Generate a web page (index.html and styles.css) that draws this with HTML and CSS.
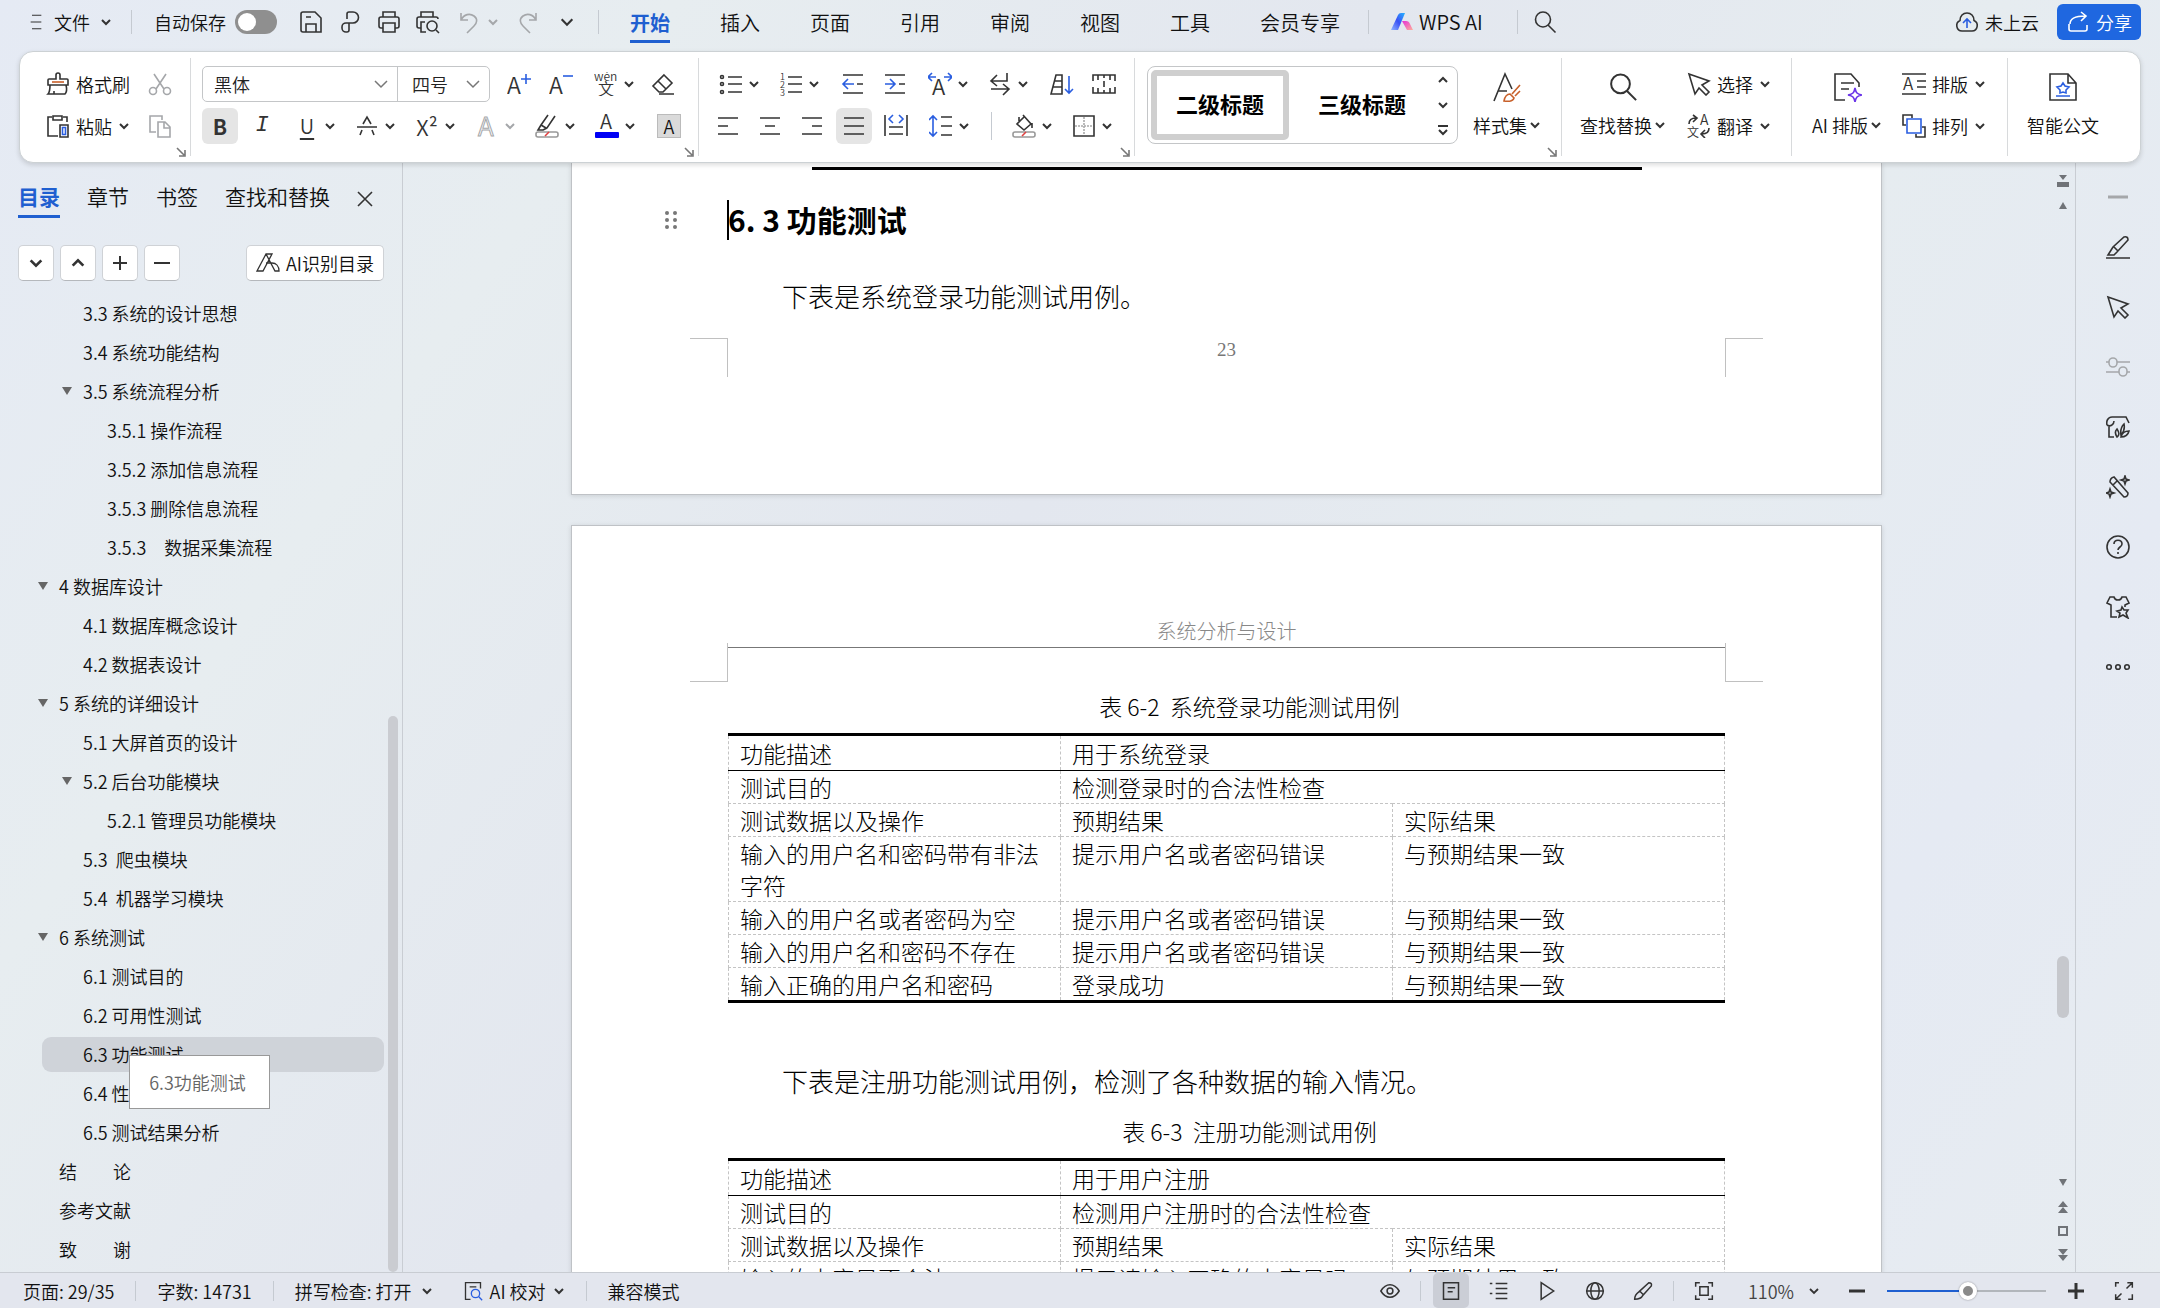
FILE: index.html
```html
<!DOCTYPE html>
<html lang="zh-CN">
<head>
  <meta charset="UTF-8">
  <meta name="viewport" content="width=device-width, initial-scale=1.0">
  <title>WPS 文字</title>
  <link rel="stylesheet" href="styles.css">
</head>
<body>

  <svg class="sprite" aria-hidden="true">
    <symbol id="chev" viewBox="0 0 12 12"><path d="M2 4l4 4 4-4"/></symbol>
    <symbol id="launch" viewBox="0 0 10 10"><path d="M1 1l7 7M9 3v6H3"/></symbol>
    <symbol id="search" viewBox="0 0 24 24"><circle cx="10" cy="9.500" r="7.500"/><path d="M15 15l7.500 7.500"/></symbol>
    <symbol id="save" viewBox="0 0 24 24"><path d="M2 4a2 2 0 0 1 2-2h12l6 6v14H4a2 2 0 0 1-2-2zM7 22v-8h10v8M7 7h5"/></symbol>
    <symbol id="pdf" viewBox="0 0 24 24"><path d="M9 9V4a2 2 0 0 1 2-2h4a5 5 0 0 1 0 11H8a4 4 0 0 0-4 4v1a4 4 0 0 0 4 4h1a2 2 0 0 0 2-2v-7"/></symbol>
    <symbol id="print" viewBox="0 0 24 24"><path d="M6 7V2h12v5M6 18H4a2 2 0 0 1-2-2V9a2 2 0 0 1 2-2h16a2 2 0 0 1 2 2v7a2 2 0 0 1-2 2h-2M6 13h12v9H6z"/></symbol>
    <symbol id="preview" viewBox="0 0 24 24"><path d="M5 7V2h12v5M5 18H3a2 2 0 0 1-2-2V9a2 2 0 0 1 2-2h17a2 2 0 0 1 2 2M9 12H5v10h5M20 20l3 3"/><circle cx="16" cy="16" r="5"/></symbol>
    <symbol id="undo" viewBox="0 0 24 24"><path d="M4 3v7h7M4 10c3-6 9-7 13-4s3 7 0 10l-7 7"/></symbol>
    <symbol id="redo" viewBox="0 0 24 24"><path d="M20 3v7h-7M20 10c-3-6-9-7-13-4s-3 7 0 10l7 7"/></symbol>
    <symbol id="cloud" viewBox="0 0 24 24"><path d="M7 21a5.500 5.500 0 0 1-2-10.500C5 6 8 3 12 3s7 3 7 7.500A5.500 5.500 0 0 1 17 21z"/><path class="blue" d="M12 18V9M8 13l4-4 4 4"/></symbol>
    <symbol id="share" viewBox="0 0 24 24"><path d="M3 14v5a2 2 0 0 0 2 2h14a2 2 0 0 0 2-2v-4M4 14c0-6 5-8 15-8M15 2l5 4-5 5"/></symbol>
    <symbol id="brush" viewBox="0 0 24 24"><path d="M10 7V3a2 2 0 0 1 4 0v4h7a1 1 0 0 1 1 1v5H2V8a1 1 0 0 1 1-1zM4 13c0 4 0 7-2 9h17c2-2 2-5 1-9M8 22v-3"/><path class="orange" d="M6 10h12"/></symbol>
    <symbol id="cut" viewBox="0 0 24 24"><path d="M6 2l10 15M18 2L8 17"/><circle cx="5" cy="19" r="3.500"/><circle cx="19" cy="19" r="3.500"/></symbol>
    <symbol id="paste" viewBox="0 0 24 24"><path d="M6 3H2v19h10M17 3h4v5M7 2h9v4H7z"/><path d="M14 11h8v12h-8z"/><path class="blue" d="M16.500 13.500h3v7h-3z"/></symbol>
    <symbol id="copy" viewBox="0 0 24 24"><path d="M8 18H2V2h12v4M10 8h7l5 5v10H10zM16 8v6h6"/></symbol>
    <symbol id="aplus" viewBox="0 0 24 24"><text x="0" y="22" font-size="23">A</text><path class="blue" d="M19 2v10M14 7h10"/></symbol>
    <symbol id="aminus" viewBox="0 0 24 24"><text x="0" y="22" font-size="23">A</text><path class="blue" d="M14 4h10"/></symbol>
    <symbol id="wen" viewBox="0 0 24 24"><text x="0" y="9" font-size="12">wén</text><text x="4" y="23" font-size="16">文</text></symbol>
    <symbol id="eraser" viewBox="0 0 24 24"><path d="M13 3l8 8-9 9H8l-6-6zM7 9l8 8M8 22h15"/></symbol>
    <symbol id="strike" viewBox="0 0 24 24"><path d="M2 13h20M8 10l4-7 4 7M7 16l-2 5M17 16l2 5"/></symbol>
    <symbol id="aoutline" viewBox="0 0 24 24"><text class="outline" x="3" y="22" font-size="26">A</text></symbol>
    <symbol id="marker" viewBox="0 0 24 24"><path d="M13 1L6 11l-3 5h5l4-2 8-12M6 11l5 3M8 16l4-2"/><rect class="grey" x="1" y="18" width="22" height="5" rx="2"/><path class="red" d="M10 22l4-4"/></symbol>
    <symbol id="acolor" viewBox="0 0 24 24"><text x="5" y="15" font-size="20">A</text><rect class="pureblue" x="0" y="18" width="24" height="6" rx="1"/></symbol>
    <symbol id="bullets" viewBox="0 0 24 24"><path d="M9 5h14M9 12h14M9 20h14"/><circle cx="3" cy="5" r="1.500"/><circle cx="3" cy="12" r="1.500"/><circle cx="3" cy="20" r="1.500"/></symbol>
    <symbol id="numbers" viewBox="0 0 24 24"><path d="M9 5h14M9 12h14M9 20h14"/><text x="1" y="8" font-size="9">1</text><text x="1" y="16" font-size="9">2</text><text x="1" y="24" font-size="9">3</text></symbol>
    <symbol id="outdent" viewBox="0 0 24 24"><path d="M2 3h20M16 12h6M2 21h20"/><path class="blue" d="M13 12H2M7 7l-5 5 5 5"/></symbol>
    <symbol id="indent" viewBox="0 0 24 24"><path d="M2 3h20M16 12h6M2 21h20"/><path class="blue" d="M2 12h10M7 7l5 5-5 5"/></symbol>
    <symbol id="aspace" viewBox="0 0 24 24"><text x="4" y="23" font-size="22">A</text><path class="blue" d="M8 5H0M4 1L0 5l4 4M16 5h8M20 1l4 4-4 4"/></symbol>
    <symbol id="wrap" viewBox="0 0 24 24"><path d="M19 1v8H4M9 3L3 9l6 5M3 17h18M15 12l6 5-6 6"/></symbol>
    <symbol id="sort" viewBox="0 0 24 24"><path d="M6 3h6v19H1zM5 9h7M3 15h9"/><path class="blue" d="M19 4v17M15 17l4 4 4-4"/></symbol>
    <symbol id="tabs" viewBox="0 0 24 24"><path d="M1 9V3h22v6M1 15v6h22v-6M6 3v5M12 3v3M18 3v5M6 21v-5M12 21v-3M18 21v-5M12 9v6"/></symbol>
    <symbol id="left" viewBox="0 0 24 24"><path d="M2 4h20M2 12h10M2 20h20"/></symbol>
    <symbol id="center" viewBox="0 0 24 24"><path d="M2 4h20M7 12h10M2 20h20"/></symbol>
    <symbol id="right" viewBox="0 0 24 24"><path d="M2 4h20M12 12h10M2 20h20"/></symbol>
    <symbol id="justify" viewBox="0 0 24 24"><path d="M2 4h20M2 12h20M2 20h20"/></symbol>
    <symbol id="distribute" viewBox="0 0 24 24"><path d="M1 1v21M23 1v21M5 13h14M5 20h14"/><path class="blue" d="M9 1L5 5l4 4M15 1l4 4-4 4"/></symbol>
    <symbol id="spacing" viewBox="0 0 24 24"><path d="M12 3h11M12 12h11M12 21h11"/><path class="blue" d="M4 2v20M0 6l4-4 4 4M0 18l4 4 4-4"/></symbol>
    <symbol id="fill" viewBox="0 0 24 24"><path d="M11 1l8 9-7 6-7-6 7-7M20 9v5M7 3v4"/><rect class="grey" x="1" y="18" width="22" height="5" rx="2"/><path class="red" d="M10 22l4-4"/></symbol>
    <symbol id="border" viewBox="0 0 24 24"><path d="M2 2h20v20H2z"/><path class="dots" d="M12 3v18M3 12h18"/></symbol>
    <symbol id="styles" viewBox="0 0 30 30"><path d="M2 29L13 2l7 15M6 19h9"/><path class="orange" d="M28 13l-8 9M28 19l-5 5M12 29c1-5 3-7 6-7l4 4c-1 3-4 4-10 3z"/></symbol>
    <symbol id="pointer" viewBox="0 0 24 24"><path d="M2 2l20 7-7 4 7 7-3 3-7-7-4 6z"/></symbol>
    <symbol id="translate" viewBox="0 0 24 24"><text x="13" y="11" font-size="14">A</text><text x="0" y="23" font-size="12">文</text><path d="M2 10c0-4 2-6 7-6M6 1l4 3-4 4M22 14c0 4-2 6-7 6M18 16l-4 4 4 4"/></symbol>
    <symbol id="aidoc" viewBox="0 0 30 30"><path d="M13 28H3V2h16l8 9v4M9 11h13M9 17h8"/><path class="purple" d="M23 16c1 5 2 6 7 7-5 1-6 2-7 7-1-5-2-6-7-7 5-1 6-2 7-7z"/></symbol>
    <symbol id="typeset" viewBox="0 0 24 24"><text x="1" y="18" font-size="17">A</text><path d="M0 2h24M15 9h9M15 15h9M0 22h24"/></symbol>
    <symbol id="arrange" viewBox="0 0 24 24"><path d="M4 11H1V1h9v3M20 13h3v10h-9v-3"/><path class="blue" d="M5 5h14v14H5z"/></symbol>
    <symbol id="smartdoc" viewBox="0 0 30 30"><path d="M2 2h18l8 9v17H2zM20 2v9h8"/><path class="blue" d="M15 11l2 3 4 1-3 3v3l-3-1-3 1v-3l-3-3 4-1zM8 24h14"/></symbol>
    <symbol id="ai" viewBox="0 0 24 24"><path d="M1 20L10 3h6L7 20zM10 3l9 17h4c0-5-3-8-7-8h-6"/></symbol>
    <symbol id="pen" viewBox="0 0 24 24"><path d="M2 20l5-8L18 2q4-1 4 3L11 17l-3 3zM8 12l4 4M0 23h24"/></symbol>
    <symbol id="sliders" viewBox="0 0 24 24"><path d="M0 7h3M11 7h13M0 17h13M21 17h3"/><rect x="3" y="3" width="8" height="9" rx="4"/><rect x="13" y="12" width="8" height="9" rx="4"/></symbol>
    <symbol id="plant" viewBox="0 0 24 24"><path d="M3 11v11h5M1 10c-1-4 1-8 5-8h14l3 6M1 10c3 2 7 0 7-4M11 22c-2-3-2-6 0-8 2 3 3 6 0 8zM15 20c-1-6 1-9 3-11 1 5 0 8-3 11zM15 22c1-4 4-6 8-6-1 4-4 6-8 6z"/></symbol>
    <symbol id="wand" viewBox="0 0 24 24"><path d="M4 7q0-4 4-5l14 16q0 4-4 4zM7 10l4-4M19 1l1 3 3 1-3 1-1 3-1-3-3-1 3-1zM4 14l1 3 3 1-3 1-1 3-1-3-3-1 3-1z"/></symbol>
    <symbol id="help" viewBox="0 0 24 24"><circle cx="12" cy="12" r="11"/><path d="M8 9c0-5 8-5 8 0 0 3-4 3-4 6M12 17v2"/></symbol>
    <symbol id="shirt" viewBox="0 0 24 24"><path d="M11 22H5V10l-4-2 3-6h4c1 4 7 4 8 0h4l3 6-4 2v2M16 12l2 3h4l-2 3 2 5-5-3-4 2 1-4-3-2 4-1z"/></symbol>
    <symbol id="more" viewBox="0 0 24 24"><circle cx="3" cy="12" r="2.300"/><circle cx="12" cy="12" r="2.300"/><circle cx="21" cy="12" r="2.300"/></symbol>
    <symbol id="eye" viewBox="0 0 24 24"><path d="M1 12c6-10 16-10 22 0-6 10-16 10-22 0z"/><circle cx="12" cy="12" r="3.500"/></symbol>
    <symbol id="pageview" viewBox="0 0 24 24"><path d="M3 2h18v20H3zM8 8h9M8 13h6"/></symbol>
    <symbol id="outline" viewBox="0 0 24 24"><path d="M1 3h3M8 3h14M8 9h14M1 15h3M8 15h14M8 21h14"/></symbol>
    <symbol id="play" viewBox="0 0 24 24"><path d="M5 2l15 10L5 22z"/></symbol>
    <symbol id="globe" viewBox="0 0 24 24"><circle cx="12" cy="12" r="10"/><ellipse cx="12" cy="12" rx="5" ry="10"/><path d="M2 12h20"/></symbol>
    <symbol id="feather" viewBox="0 0 24 24"><path d="M2 22c0-5 2-7 5-9L19 2q4 0 3 4L12 17c-2 4-5 5-10 5zM8 12l5 5"/></symbol>
    <symbol id="fit" viewBox="0 0 24 24"><path d="M2 7V2h5M17 2h5v5M2 17v5h5M17 22h5v-5M7 7h10v10H7z"/></symbol>
    <symbol id="full" viewBox="0 0 24 24"><path d="M2 7V2h4M16 2h6v6M22 16v6h-5M8 22H2v-6M22 2l-7 7M2 22l7-7"/></symbol>
    <symbol id="proof" viewBox="0 0 24 24"><path d="M9 22H3V2h18v7M8 7h8"/><circle class="blue" cx="15" cy="15" r="5"/><path class="blue" d="M19 19l4 4"/></symbol>
  </svg>

  <header class="topbar">
    <button class="menu-btn"><svg class="i-16" viewBox="0 0 16 24"><path d="M2 2h14M0 12h16M2 22h14"/></svg>文件<svg class="i-12"><use href="#chev"/></svg></button>
    <span class="sep"></span>
    <label class="autosave">自动保存<input type="checkbox" class="switch"></label>
    <div class="quick">
      <button title="保存"><svg><use href="#save"/></svg></button>
      <button title="输出为PDF"><svg><use href="#pdf"/></svg></button>
      <button title="打印"><svg><use href="#print"/></svg></button>
      <button title="打印预览"><svg><use href="#preview"/></svg></button>
      <button class="off drop-sm" title="撤销"><svg><use href="#undo"/></svg><svg class="i-12"><use href="#chev"/></svg></button>
      <button class="off" title="恢复"><svg><use href="#redo"/></svg></button>
      <button title="更多"><svg class="i-16"><use href="#chev"/></svg></button>
    </div>
    <span class="sep"></span>
    <nav class="tabs">
      <a href="#" class="active">开始</a>
      <a href="#">插入</a>
      <a href="#">页面</a>
      <a href="#">引用</a>
      <a href="#">审阅</a>
      <a href="#">视图</a>
      <a href="#">工具</a>
      <a href="#">会员专享</a>
    </nav>
    <span class="sep"></span>
    <a href="#" class="wps-ai">
      <svg viewBox="0 0 24 24">
        <defs>
          <linearGradient id="g1" x1="0" y1="1" x2="1" y2="0"><stop offset="0" stop-color="#8fb4ff"/><stop offset=".5" stop-color="#3a50f5"/><stop offset="1" stop-color="#25b4ff"/></linearGradient>
          <linearGradient id="g2" x1="0" y1="0" x2="1" y2="1"><stop offset="0" stop-color="#e52fd8"/><stop offset="1" stop-color="#ffb09a"/></linearGradient>
        </defs>
        <path d="M1 20L8 5q1-2 3-2h4L8 20z" fill="url(#g1)" stroke="none"/>
        <path d="M12 11h4q3 0 4 3l3 6h-6z" fill="url(#g2)" stroke="none"/>
      </svg>WPS AI</a>
    <span class="sep"></span>
    <button title="搜索"><svg><use href="#search"/></svg></button>
    <div class="account">
      <button class="cloud-btn"><svg><use href="#cloud"/></svg>未上云</button>
      <button class="share-btn"><svg><use href="#share"/></svg>分享</button>
    </div>
  </header>

  <section class="ribbon">
    <div class="group clip">
      <div class="row">
        <button class="text-btn"><svg><use href="#brush"/></svg>格式刷</button>
        <button class="off" title="剪切"><svg><use href="#cut"/></svg></button>
      </div>
      <div class="row">
        <button class="text-btn"><svg><use href="#paste"/></svg>粘贴<svg class="i-12"><use href="#chev"/></svg></button>
        <button class="off" title="复制"><svg><use href="#copy"/></svg></button>
      </div>
      <svg class="launcher"><use href="#launch"/></svg>
    </div>

    <div class="group font">
      <div class="row">
        <div class="font-box">
          <select class="font-name" aria-label="字体"><option>黑体</option></select>
          <select class="font-size" aria-label="字号"><option>四号</option></select>
        </div>
        <button class="tool" title="增大字号"><svg><use href="#aplus"/></svg></button>
        <button class="tool" title="减小字号"><svg><use href="#aminus"/></svg></button>
        <button class="drop" title="拼音指南"><svg><use href="#wen"/></svg><svg class="i-12"><use href="#chev"/></svg></button>
        <button class="tool" title="清除格式"><svg><use href="#eraser"/></svg></button>
      </div>
      <div class="row">
        <button class="tool on" title="加粗"><b>B</b></button>
        <button class="tool" title="倾斜"><i>I</i></button>
        <button class="drop" title="下划线"><u>U</u><svg class="i-12"><use href="#chev"/></svg></button>
        <button class="drop" title="删除线"><svg><use href="#strike"/></svg><svg class="i-12"><use href="#chev"/></svg></button>
        <button class="drop" title="上标"><span class="glyph">X²</span><svg class="i-12"><use href="#chev"/></svg></button>
        <button class="drop off" title="文字效果"><svg><use href="#aoutline"/></svg><svg class="i-12"><use href="#chev"/></svg></button>
        <button class="drop" title="突出显示"><svg><use href="#marker"/></svg><svg class="i-12"><use href="#chev"/></svg></button>
        <button class="drop" title="字体颜色"><svg><use href="#acolor"/></svg><svg class="i-12"><use href="#chev"/></svg></button>
        <button class="tool space" title="字符底纹"><span class="shade">A</span></button>
      </div>
      <svg class="launcher"><use href="#launch"/></svg>
    </div>

    <div class="group para">
      <div class="row">
        <button class="drop" title="项目符号"><svg><use href="#bullets"/></svg><svg class="i-12"><use href="#chev"/></svg></button>
        <button class="drop" title="编号"><svg><use href="#numbers"/></svg><svg class="i-12"><use href="#chev"/></svg></button>
        <button class="tool space" title="减少缩进"><svg><use href="#outdent"/></svg></button>
        <button class="tool" title="增加缩进"><svg><use href="#indent"/></svg></button>
        <button class="drop" title="中文版式"><svg><use href="#aspace"/></svg><svg class="i-12"><use href="#chev"/></svg></button>
        <button class="drop" title="换行"><svg><use href="#wrap"/></svg><svg class="i-12"><use href="#chev"/></svg></button>
        <button class="tool space" title="排序"><svg><use href="#sort"/></svg></button>
        <button class="tool" title="制表位"><svg><use href="#tabs"/></svg></button>
      </div>
      <div class="row">
        <button class="tool" title="左对齐"><svg><use href="#left"/></svg></button>
        <button class="tool" title="居中"><svg><use href="#center"/></svg></button>
        <button class="tool" title="右对齐"><svg><use href="#right"/></svg></button>
        <button class="tool on" title="两端对齐"><svg><use href="#justify"/></svg></button>
        <button class="tool" title="分散对齐"><svg><use href="#distribute"/></svg></button>
        <button class="drop" title="行距"><svg><use href="#spacing"/></svg><svg class="i-12"><use href="#chev"/></svg></button>
        <span class="sep sep-row"></span>
        <button class="drop" title="底纹颜色"><svg><use href="#fill"/></svg><svg class="i-12"><use href="#chev"/></svg></button>
        <button class="drop" title="边框"><svg><use href="#border"/></svg><svg class="i-12"><use href="#chev"/></svg></button>
      </div>
      <svg class="launcher"><use href="#launch"/></svg>
    </div>

    <div class="group wide styles-group">
      <div class="gallery">
        <button class="style-item chosen">二级标题</button>
        <button class="style-item">三级标题</button>
        <div class="gallery-nav">
          <svg class="i-12 up"><use href="#chev"/></svg>
          <svg class="i-12"><use href="#chev"/></svg>
          <svg class="i-12" viewBox="0 0 12 12"><path d="M1 2h10M2 6l4 4 4-4"/></svg>
        </div>
      </div>
      <button class="big"><svg class="i-30"><use href="#styles"/></svg><span>样式集<svg class="i-12"><use href="#chev"/></svg></span></button>
      <svg class="launcher"><use href="#launch"/></svg>
    </div>

    <div class="group wide find">
      <button class="big"><svg class="i-30"><use href="#search"/></svg><span>查找替换<svg class="i-12"><use href="#chev"/></svg></span></button>
      <div class="stack">
        <button class="text-btn"><svg><use href="#pointer"/></svg>选择<svg class="i-12"><use href="#chev"/></svg></button>
        <button class="text-btn"><svg><use href="#translate"/></svg>翻译<svg class="i-12"><use href="#chev"/></svg></button>
      </div>
    </div>

    <div class="group wide layout">
      <button class="big"><svg class="i-30"><use href="#aidoc"/></svg><span>AI 排版<svg class="i-12"><use href="#chev"/></svg></span></button>
      <div class="stack">
        <button class="text-btn"><svg><use href="#typeset"/></svg>排版<svg class="i-12"><use href="#chev"/></svg></button>
        <button class="text-btn"><svg><use href="#arrange"/></svg>排列<svg class="i-12"><use href="#chev"/></svg></button>
      </div>
    </div>

    <div class="group wide smart">
      <button class="big"><svg class="i-30"><use href="#smartdoc"/></svg><span>智能公文</span></button>
    </div>
  </section>

  <main class="workspace">
    <aside class="sidebar">
      <div class="side-tabs">
        <a href="#" class="active">目录</a>
        <a href="#">章节</a>
        <a href="#">书签</a>
        <a href="#">查找和替换</a>
        <button title="关闭"><svg class="i-16" viewBox="0 0 16 16"><path d="M1 1l14 14M15 1L1 15"/></svg></button>
      </div>
      <div class="side-tools">
        <button title="展开"><svg class="i-16"><use href="#chev"/></svg></button>
        <button title="收起"><svg class="i-16 up"><use href="#chev"/></svg></button>
        <button title="增加"><svg class="i-16" viewBox="0 0 16 16"><path d="M8 1v14M1 8h14"/></svg></button>
        <button title="减少"><svg class="i-16" viewBox="0 0 16 16"><path d="M0 8h16"/></svg></button>
        <button class="ai-toc"><svg><use href="#ai"/></svg>AI识别目录</button>
      </div>
      <div class="toc-wrap">
        <ul class="toc">
          <li class="l2">3.3 系统的设计思想</li>
          <li class="l2">3.4 系统功能结构</li>
          <li class="l2 open">3.5 系统流程分析</li>
          <li class="l3">3.5.1 操作流程</li>
          <li class="l3">3.5.2 添加信息流程</li>
          <li class="l3">3.5.3 删除信息流程</li>
          <li class="l3">3.5.3　数据采集流程</li>
          <li class="l1 open">4 数据库设计</li>
          <li class="l2">4.1 数据库概念设计</li>
          <li class="l2">4.2 数据表设计</li>
          <li class="l1 open">5 系统的详细设计</li>
          <li class="l2">5.1 大屏首页的设计</li>
          <li class="l2 open">5.2 后台功能模块</li>
          <li class="l3">5.2.1 管理员功能模块</li>
          <li class="l2">5.3&nbsp; 爬虫模块</li>
          <li class="l2">5.4&nbsp; 机器学习模块</li>
          <li class="l1 open">6 系统测试</li>
          <li class="l2">6.1 测试目的</li>
          <li class="l2">6.2 可用性测试</li>
          <li class="l2 current">6.3 功能测试<span class="tooltip">6.3功能测试</span></li>
          <li class="l2">6.4 性能测试</li>
          <li class="l2">6.5 测试结果分析</li>
          <li class="l1">结　　论</li>
          <li class="l1">参考文献</li>
          <li class="l1">致　　谢</li>
        </ul>
        <div class="side-scroll"></div>
      </div>
    </aside>

    <div class="canvas">
      <article class="page first">
        <div class="table-end"></div>
        <h2><svg class="grip" viewBox="0 0 12 18"><circle cx="2" cy="2" r="2"/><circle cx="10" cy="2" r="2"/><circle cx="2" cy="9" r="2"/><circle cx="10" cy="9" r="2"/><circle cx="2" cy="16" r="2"/><circle cx="10" cy="16" r="2"/></svg><span class="caret"></span>6. 3 功能测试</h2>
        <p>下表是系统登录功能测试用例。</p>
        <div class="crop bottom"><i></i><span class="page-no">23</span><i></i></div>
      </article>

      <article class="page second">
        <div class="page-header">系统分析与设计</div>
        <div class="crop top"><i></i><span class="rule"></span><i></i></div>
        <table>
          <caption>表 6-2&nbsp; 系统登录功能测试用例</caption>
          <colgroup><col><col><col></colgroup>
          <tr class="head"><td>功能描述</td><td colspan="2">用于系统登录</td></tr>
          <tr><td>测试目的</td><td colspan="2">检测登录时的合法性检查</td></tr>
          <tr><td>测试数据以及操作</td><td>预期结果</td><td>实际结果</td></tr>
          <tr><td>输入的用户名和密码带有非法字符</td><td>提示用户名或者密码错误</td><td>与预期结果一致</td></tr>
          <tr><td>输入的用户名或者密码为空</td><td>提示用户名或者密码错误</td><td>与预期结果一致</td></tr>
          <tr><td>输入的用户名和密码不存在</td><td>提示用户名或者密码错误</td><td>与预期结果一致</td></tr>
          <tr><td>输入正确的用户名和密码</td><td>登录成功</td><td>与预期结果一致</td></tr>
        </table>
        <p>下表是注册功能测试用例，检测了各种数据的输入情况。</p>
        <table>
          <caption>表 6-3&nbsp; 注册功能测试用例</caption>
          <colgroup><col><col><col></colgroup>
          <tr class="head"><td>功能描述</td><td colspan="2">用于用户注册</td></tr>
          <tr><td>测试目的</td><td colspan="2">检测用户注册时的合法性检查</td></tr>
          <tr><td>测试数据以及操作</td><td>预期结果</td><td>实际结果</td></tr>
          <tr><td>输入的内容是否合法</td><td>提示请输入正确的内容是吗</td><td>与预期结果一致</td></tr>
        </table>
      </article>
    </div>

    <div class="scroll-col">
      <svg class="i-12" viewBox="0 0 12 12"><path d="M2 0h8L6 5zM0 7h12v5H0z"/></svg>
      <svg class="i-12" viewBox="0 0 12 12"><path d="M2 10l4-7 4 7z"/></svg>
      <div class="track"><div class="thumb"></div></div>
      <svg class="i-12" viewBox="0 0 12 12"><path d="M2 2l4 7 4-7z"/></svg>
      <svg class="i-12" viewBox="0 0 12 12"><path d="M1 6l5-6 5 6zM1 12l5-6 5 6z"/></svg>
      <svg class="i-12" viewBox="0 0 12 12"><path class="ring" d="M2 2h8v8H2z"/></svg>
      <svg class="i-12" viewBox="0 0 12 12"><path d="M1 0l5 6 5-6zM1 6l5 6 5-6z"/></svg>
    </div>

    <aside class="rail">
      <button class="off" title="收起"><svg viewBox="0 0 24 24"><path class="bar" d="M2 12h20"/></svg></button>
      <button title="编辑"><svg><use href="#pen"/></svg></button>
      <button title="选择"><svg><use href="#pointer"/></svg></button>
      <button class="off" title="属性"><svg><use href="#sliders"/></svg></button>
      <button title="素材"><svg><use href="#plant"/></svg></button>
      <button title="工具"><svg><use href="#wand"/></svg></button>
      <button title="帮助"><svg><use href="#help"/></svg></button>
      <button title="皮肤"><svg><use href="#shirt"/></svg></button>
      <button title="更多"><svg><use href="#more"/></svg></button>
    </aside>
  </main>

  <footer class="status">
    <span>页面: 29/35</span>
    <span class="sep"></span>
    <span>字数: 14731</span>
    <span class="sep"></span>
    <button>拼写检查: 打开<svg class="i-12"><use href="#chev"/></svg></button>
    <button class="proof"><svg class="i-20"><use href="#proof"/></svg>AI 校对<svg class="i-12"><use href="#chev"/></svg></button>
    <span class="sep"></span>
    <span>兼容模式</span>
    <div class="views">
      <button title="护眼模式"><svg><use href="#eye"/></svg></button>
      <span class="sep"></span>
      <button class="active" title="页面视图"><svg><use href="#pageview"/></svg></button>
      <button title="大纲"><svg><use href="#outline"/></svg></button>
      <button title="阅读"><svg><use href="#play"/></svg></button>
      <button title="Web 版式"><svg><use href="#globe"/></svg></button>
      <button title="写作"><svg><use href="#feather"/></svg></button>
      <span class="sep"></span>
      <button title="适合页面"><svg><use href="#fit"/></svg></button>
      <button class="zoom-value">110%<svg class="i-12"><use href="#chev"/></svg></button>
      <button title="缩小"><svg class="i-16" viewBox="0 0 16 16"><path class="bar" d="M0 8h16"/></svg></button>
      <input type="range" class="zoom" min="0" max="100" value="51" aria-label="缩放">
      <button title="放大"><svg class="i-16" viewBox="0 0 16 16"><path class="bar" d="M0 8h16M8 0v16"/></svg></button>
      <button class="full" title="全屏"><svg><use href="#full"/></svg></button>
    </div>
  </footer>

</body>
</html>
```
FILE: styles.css
```css
* {
  box-sizing: border-box;
}

body {
  margin: 0;
  height: 100vh;
  display: flex;
  flex-direction: column;
  overflow: hidden;
  color: #111;
  font-family: "Noto Sans CJK SC", sans-serif;
  font-size: 18px;
  font-weight: 350;
  line-height: 24px;
  background: linear-gradient(125deg, #e5eaf4 0%, #e7edf0 22%, #e3e7ef 45%, #e6ecf0 65%, #e5eaf3 82%, #e7ecf0 100%);
}

a {
  color: inherit;
  text-decoration: none;
}

button {
  display: flex;
  align-items: center;
  justify-content: center;
  padding: 0;
  border: none;
  background: none;
  color: inherit;
  font: inherit;
  white-space: nowrap;
  cursor: pointer;
}

/* icons */
svg {
  width: 24px;
  height: 24px;
  flex: none;
  fill: none;
  stroke: #333;
  stroke-width: 1.6;
}

svg text {
  fill: #333;
  stroke: none;
  font-family: "Noto Sans CJK SC", sans-serif;
}

svg text.outline {
  fill: none;
  stroke: #a5a7aa;
  stroke-width: 1;
}

.sprite {
  display: none;
}

.i-12 {
  width: 12px;
  height: 12px;
  stroke-width: 2;
}

.i-16 {
  width: 16px;
  height: 16px;
}

.i-20 {
  width: 20px;
  height: 22px;
}

.i-30 {
  width: 30px;
  height: 30px;
}

.up {
  transform: rotate(180deg);
}

.off svg {
  stroke: #a5a7aa;
}

.blue { stroke: #2a5ee0; }
.orange { stroke: #c8602a; }
.purple { stroke: #6a35e8; }
.red { stroke: #e04040; }
.grey { stroke: #999; }
.dots { stroke: #aaa; stroke-dasharray: 2 1; }
.pureblue { fill: #0000f5; stroke: none; }
.bar { stroke-width: 3; }

.sep {
  width: 1px;
  height: 24px;
  flex: none;
  background: #c5cad1;
}

/* top bar */
.topbar {
  display: flex;
  align-items: center;
  height: 51px;
  flex: none;
  padding: 0 19px 7px 28px;
}

.menu-btn {
  gap: 10px;
  margin-right: 19px;
}

.autosave {
  display: flex;
  align-items: center;
  gap: 9px;
  margin: 0 15px 0 22px;
}

.switch {
  appearance: none;
  width: 42px;
  height: 24px;
  margin: 0;
  border-radius: 12px;
  background: #8f8f8f;
}

.switch::before {
  content: "";
  display: block;
  width: 18px;
  height: 18px;
  margin: 3px;
  border-radius: 9px;
  background: #fff;
}

.quick {
  display: flex;
  gap: 1px;
  margin-right: 12px;
}

.quick button {
  width: 38px;
}

.quick .drop-sm {
  width: 60px;
  gap: 6px;
}

.tabs {
  display: flex;
  gap: 50px;
  margin: 0 28px 0 31px;
  font-size: 20px;
}

.tabs a {
  padding: 5px 0;
  border-bottom: 3px solid transparent;
  margin-bottom: -4px;
}

.tabs a.active {
  color: #1f5fd0;
  font-weight: 700;
  border-color: #1f5fd0;
}

.wps-ai {
  display: flex;
  align-items: center;
  gap: 5px;
  margin: 0 34px 0 21px;
  font-size: 20px;
}

.topbar > button:not(.menu-btn) {
  margin-left: 15px;
}

.account {
  display: flex;
  gap: 18px;
  margin-left: auto;
}

.cloud-btn {
  gap: 6px;
}

.share-btn {
  width: 84px;
  height: 36px;
  gap: 6px;
  border-radius: 6px;
  background: #1f67e0;
  color: #fff;
}

.share-btn svg {
  stroke: #fff;
}

/* ribbon */
.ribbon {
  position: relative;
  z-index: 2;
  display: flex;
  align-items: stretch;
  height: 112px;
  flex: none;
  margin: 0 19px;
  padding: 6px 0;
  border: 1px solid #ccd1d4;
  border-radius: 14px;
  background: #fff;
  box-shadow: 0 2px 5px rgba(0, 0, 0, 0.14);
}

.group {
  position: relative;
  flex: none;
  padding: 8px 0 0;
  border-right: 1px solid #d8dadc;
}

.group:last-child {
  border-right: none;
}

.row {
  display: flex;
  align-items: center;
  gap: 6px;
  height: 36px;
  margin-bottom: 6px;
}

.launcher {
  position: absolute;
  right: 4px;
  bottom: -1px;
  width: 10px;
  height: 10px;
  stroke: #777;
}

.tool {
  width: 36px;
  height: 36px;
  border-radius: 6px;
}

.tool.on {
  background: #e5e5e5;
}

.space {
  margin-left: 5px;
}

.drop {
  width: 54px;
  height: 36px;
  justify-content: flex-start;
  gap: 5px;
  padding-left: 9px;
}

.tool b,
.tool i,
.drop u,
.glyph {
  width: 24px;
  font-size: 22px;
  color: #333;
}

.tool b { font-size: 21px; }
.tool i { font-family: "Liberation Mono", monospace; }
.drop u { font-size: 20px; text-underline-offset: 4px; }

.shade {
  width: 24px;
  height: 24px;
  border: 1px solid #bbb;
  background: #dadada;
  line-height: 22px;
}

.text-btn {
  gap: 6px;
}

.clip {
  width: 171px;
  padding-left: 26px;
}

.clip .row {
  justify-content: space-between;
  padding-right: 18px;
}

.font {
  width: 508px;
  padding-left: 11px;
}

.font-box {
  display: flex;
  width: 288px;
  height: 36px;
  margin-right: 5px;
  border: 1px solid #c4c6c8;
  border-radius: 5px;
}

select {
  appearance: none;
  border: none;
  padding: 0 11px;
  font: inherit;
  color: #222;
  background: url("data:image/svg+xml,%3Csvg xmlns='http://www.w3.org/2000/svg' viewBox='0 0 14 14' fill='none' stroke='%23777' stroke-width='1.5'%3E%3Cpath d='M1 4l6 6 6-6'/%3E%3C/svg%3E") no-repeat right 9px center / 14px 14px;
}

.font-name {
  flex: 1;
}

.font-size {
  width: 92px;
  padding-left: 14px;
  border-left: 1px solid #c4c6c8;
}

.para {
  width: 436px;
  padding-left: 11px;
}

.sep-row {
  height: 28px;
  margin: 0 5px 0 11px;
}

.wide {
  display: flex;
}

.styles-group {
  width: 427px;
  padding-left: 12px;
  gap: 15px;
}

.gallery {
  display: flex;
  align-items: center;
  width: 311px;
  height: 78px;
  padding-left: 3px;
  border: 1px solid #c4c6c8;
  border-radius: 8px;
}

.style-item {
  width: 138px;
  height: 70px;
  padding-bottom: 5px;
  border-radius: 5px;
  font-size: 22px;
  font-weight: 700;
  color: #000;
}

.style-item.chosen {
  margin-right: 4px;
  border: 6px solid #cfcfcf;
}

.gallery-nav {
  display: flex;
  flex-direction: column;
  gap: 13px;
  margin-left: 6px;
}

.big {
  flex-direction: column;
  justify-content: flex-start;
  height: 84px;
  padding-top: 6px;
  gap: 11px;
}

.big span {
  display: flex;
  align-items: center;
  gap: 2px;
}

.find {
  width: 230px;
  padding-left: 18px;
  gap: 21px;
}

.stack {
  display: flex;
  flex-direction: column;
  gap: 6px;
}

.stack .text-btn {
  height: 36px;
}

.layout {
  width: 216px;
  padding-left: 20px;
  gap: 20px;
}

.smart {
  padding-left: 19px;
}

/* workspace */
.workspace {
  display: flex;
  flex: 1;
  min-height: 0;
}

.sidebar {
  display: flex;
  flex-direction: column;
  width: 403px;
  flex: none;
  border-right: 1px solid #c9cdd3;
}

.side-tabs {
  display: flex;
  align-items: center;
  gap: 27px;
  padding: 17px 0 0 18px;
  font-size: 21px;
}

.side-tabs a {
  padding: 4px 0 7px;
  border-bottom: 3px solid transparent;
}

.side-tabs a.active {
  color: #1f5fd0;
  font-weight: 700;
  border-color: #1f5fd0;
}

.side-tools {
  display: flex;
  gap: 6px;
  margin: 27px 18px 15px 18px;
}

.side-tools button {
  width: 36px;
  height: 36px;
  border: 1px solid #cfd2d6;
  border-bottom-color: #b5b8bc;
  border-radius: 5px;
  background: #fff;
}

.side-tools svg {
  stroke-width: 2;
}

.side-tools .ai-toc {
  width: 138px;
  margin-left: auto;
  gap: 6px;
}

.side-tools .ai-toc svg {
  stroke-width: 1.3;
}

.toc-wrap {
  position: relative;
  flex: 1;
}

.toc {
  margin: 0;
  padding: 0 18px 0 42px;
  list-style: none;
}

.toc li {
  position: relative;
  height: 35px;
  margin: 0 0 4px;
  line-height: 35px;
  border-radius: 9px;
  white-space: pre;
}

.l1 { padding-left: 17px; }
.l2 { padding-left: 41px; }
.l3 { padding-left: 65px; }

.open::before {
  content: "";
  position: absolute;
  top: 13px;
  margin-left: -21px;
  border: 5px solid transparent;
  border-top: 8px solid #666;
  border-bottom: none;
}

.toc .current {
  background: #cfd3d9;
}

.tooltip {
  position: absolute;
  z-index: 1;
  top: 18px;
  left: 87px;
  width: 141px;
  padding-right: 4px;
  border: 1px solid #999;
  background: #fff;
  color: #666;
  line-height: 52px;
  text-align: center;
}

.side-scroll {
  position: absolute;
  right: 4px;
  bottom: 0;
  width: 10px;
  height: 57%;
  border-radius: 5px;
  background: #caccd1;
}

.canvas {
  flex: 1;
  min-width: 0;
  overflow: hidden;
}

.page {
  width: 1311px;
  margin: 0 auto 30px;
  padding: 0 156px;
  border: 1px solid #bfc2c6;
  background: #fff;
  color: #000;
  font-weight: 300;
  box-shadow: 0 1px 5px rgba(0, 0, 0, 0.12);
}

.page.first {
  border-top: none;
  padding-top: 4px;
  padding-bottom: 117px;
}

/* A4 sheet */
.page.second {
  min-height: 1853px;
}

.table-end {
  width: 830px;
  height: 3px;
  margin: 0 auto;
  background: #000;
}

h2 {
  position: relative;
  margin: 27px 0 35px;
  font-size: 30px;
  line-height: 44px;
}

.caret {
  position: absolute;
  left: -1px;
  top: 3px;
  width: 2px;
  height: 40px;
  background: #000;
}

.grip {
  position: absolute;
  left: -63px;
  top: 14px;
  width: 12px;
  height: 18px;
  fill: #777;
  stroke: none;
}

.page p {
  margin: 0;
  padding-left: 54px;
  font-size: 26px;
  line-height: 40px;
}

.crop {
  display: flex;
  height: 39px;
  margin: 0 -38px;
}

.crop i {
  width: 38px;
  border: 0 solid #c0c0c0;
  border-right-width: 1px;
}

.crop i:last-child {
  border-right-width: 0;
  border-left-width: 1px;
}

.crop.bottom { margin-top: 22px; }
.crop.bottom i { border-top-width: 1px; }
.crop.top i { border-bottom-width: 1px; }

.page-no {
  flex: 1;
  color: #777;
  font-family: "Liberation Serif", serif;
  font-size: 19px;
  text-align: center;
}

.rule {
  flex: 1;
  margin-top: 4px;
  border-top: 1px solid #777;
}

.page-header {
  padding: 93px 0 0;
  color: #888;
  font-size: 20px;
  text-align: center;
}

table {
  width: 100%;
  table-layout: fixed;
  border-collapse: collapse;
  border-top: 3px solid #000;
  border-bottom: 3px solid #000;
  font-size: 23px;
  line-height: 32px;
}

/* centred with the two-character first line indent */
caption {
  padding: 8px 0 10px 46px;
  line-height: 33px;
}

td {
  padding: 0 11px;
  border: 1px dashed #c4c4c4;
  vertical-align: top;
}

.head td {
  padding-top: 1px;
  padding-bottom: 1px;
  border-top: 3px solid #000;
  border-bottom: 1px solid #000;
}

tr:last-child td {
  border-bottom-width: 0;
}

.page table + p {
  margin: 58px 0 6px;
}

.scroll-col {
  display: flex;
  flex-direction: column;
  align-items: center;
  gap: 12px;
  width: 25px;
  flex: none;
  padding: 12px 0 11px;
}

.scroll-col svg {
  fill: #707378;
  stroke: none;
}

.scroll-col .ring {
  fill: none;
  stroke: #707378;
  stroke-width: 2;
}

.track {
  display: flex;
  flex-direction: column;
  flex: 1;
}

.track::before {
  content: "";
  flex: 5;
}

.track::after {
  content: "";
  flex: 1;
}

.thumb {
  width: 12px;
  height: 62px;
  border-radius: 6px;
  background: #c6c8cd;
}

.rail {
  display: flex;
  flex-direction: column;
  align-items: center;
  gap: 36px;
  width: 85px;
  flex: none;
  padding-top: 22px;
  border-left: 1px solid #c9cdd3;
}

.rail button {
  height: 24px;
}

.rail button:first-child {
  margin-bottom: -10px;
}

/* status bar */
.status {
  display: flex;
  align-items: center;
  height: 36px;
  flex: none;
  padding: 0 23px;
  border-top: 1px solid #c8ccd2;
  background: #e3e6ee;
}

.status .sep {
  height: 20px;
  margin: 0 21px;
}

.status button {
  gap: 9px;
}

.status .proof {
  margin-left: 30px;
  gap: 7px;
}

.views {
  display: flex;
  align-items: center;
  height: 100%;
  margin-left: auto;
}

.views button {
  width: 36px;
  height: 35px;
  margin-right: 12px;
  border-radius: 5px;
}

.views svg {
  width: 20px;
  height: 20px;
  stroke-width: 1.8;
}

.views .i-12 {
  width: 12px;
  height: 12px;
}

.views .i-16 {
  width: 16px;
  height: 16px;
}

.status .views .sep {
  margin: 0 12px 0 0;
}

.status .views .zoom-value {
  width: 78px;
  margin: 0 16px 0 11px;
  gap: 14px;
  color: #444;
}

.views .active {
  background: #cbced6;
}

.views .full {
  margin: 0 -5px 0 0;
}

.zoom {
  appearance: none;
  width: 159px;
  height: 18px;
  margin: 0 12px 0 0;
  background: linear-gradient(90deg, #1f5fd0 50%, #b2b6bb 50%) center / 100% 2px no-repeat;
}

.zoom::-webkit-slider-thumb {
  appearance: none;
  width: 18px;
  height: 18px;
  border: 4px solid #fff;
  border-radius: 50%;
  background: #8a8a8a;
  box-shadow: 0 0 2px rgba(0, 0, 0, 0.4);
}
```
